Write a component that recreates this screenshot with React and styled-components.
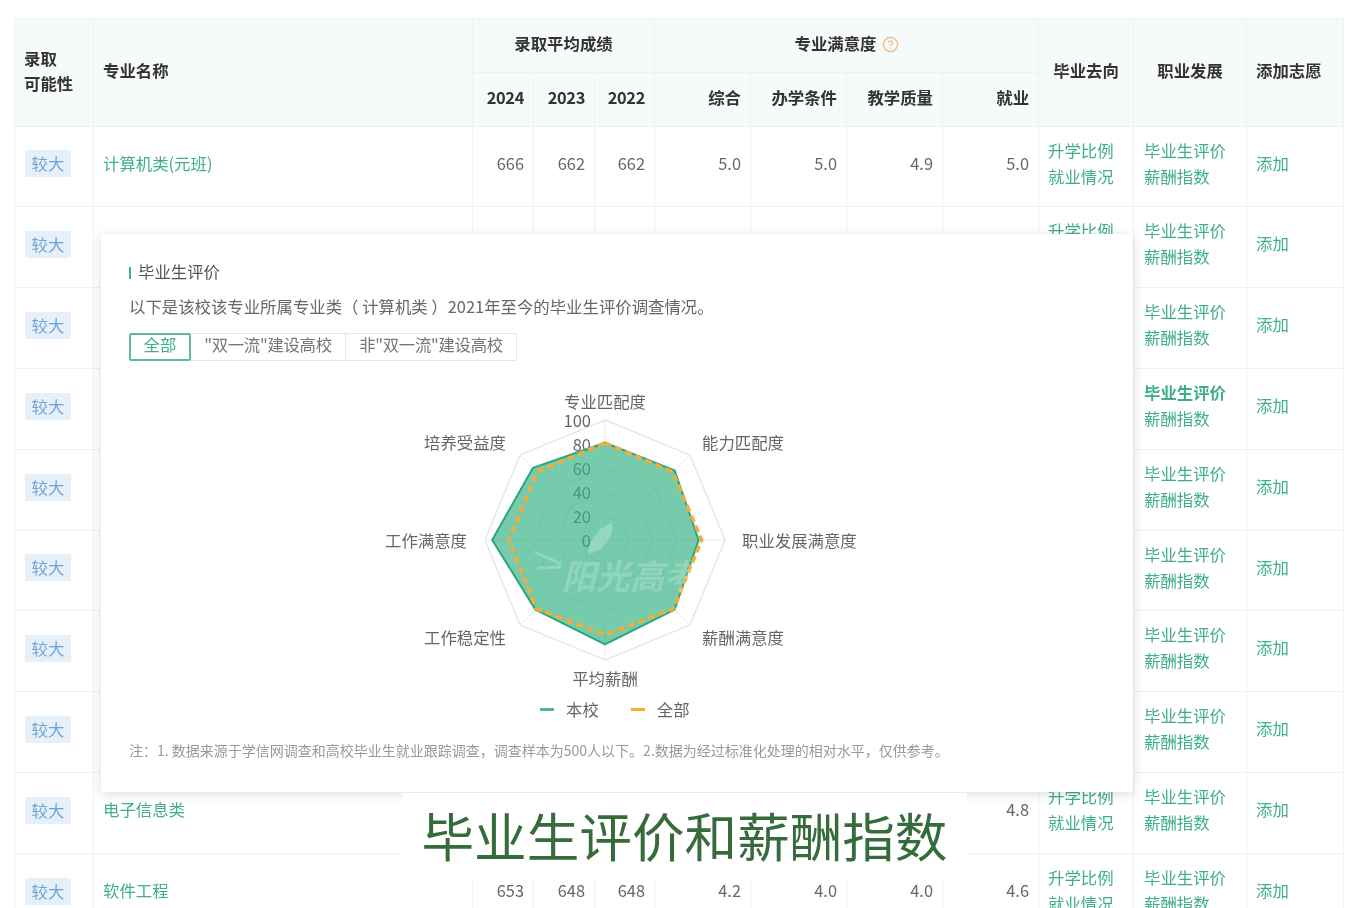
import React from 'react';
import styled, { createGlobalStyle } from 'styled-components';
import { CircleHelp } from 'lucide-react';

const GlobalStyle = createGlobalStyle`
  html, body {
    margin: 0;
    height: 908px;
    overflow: hidden;
    background: #fff;
  }
  body {
    font-family: "Noto Sans CJK SC", "Noto Sans", sans-serif;
    font-size: 16.4px;
    color: #666;
  }
`;

const Page = styled.div`
  position: relative;
  width: 1347px;
  height: 908px;
  overflow: hidden;
  box-sizing: border-box;
  padding: 18px 4px 0 14px;
  filter: blur(0.55px);
`;

const Table = styled.table`
  width: 1329px;
  table-layout: fixed;
  border-collapse: collapse;
`;

const HeadCell = styled.th`
  background: #f7fafa;
  border: 1px solid #eef2f2;
  box-sizing: border-box;
  height: ${(p) => p.$h || 54}px;
  padding: 0 9px 4px 9px;
  color: #333;
  font-size: 16.4px;
  font-weight: 700;
  line-height: 25px;
  letter-spacing: ${(p) => (p.$tight ? '-0.35px' : 'normal')};
  text-align: ${(p) => p.$align || 'left'};
`;

const Cell = styled.td`
  border: 1px solid #eff2f2;
  box-sizing: border-box;
  padding: 0 9px 8px ${(p) => p.$inset || 9}px;
  line-height: 26px;
  text-align: ${(p) => p.$align || 'left'};
  vertical-align: middle;
`;

const BodyRow = styled.tr`
  height: ${(p) => p.$h}px;
`;

const Chance = styled.span`
  display: inline-block;
  width: 46px;
  height: 27px;
  margin: 1px 0 0 1px;
  background: #e6f0fa;
  border-radius: 2px;
  color: #6ea4d4;
  line-height: 27px;
  text-align: center;
  vertical-align: middle;
`;

const Link = styled.a`
  display: block;
  color: #3eae8b;
  font-weight: ${(p) => (p.$active ? 700 : 400)};
`;

const Num = styled.span`
  color: #666;
  font-size: 16.4px;
`;

const Hint = styled(CircleHelp)`
  margin-left: 5px;
  vertical-align: -3px;
  color: #efb983;
`;

const Modal = styled.div`
  position: absolute;
  left: 101px;
  top: 234px;
  width: 1032px;
  height: 558px;
  box-sizing: border-box;
  padding: 27px 28px 0;
  background: #fff;
  border-radius: 3px;
  box-shadow: 0 2px 12px rgba(0, 0, 0, 0.14);
`;

const Title = styled.div`
  display: flex;
  align-items: center;
  gap: 7px;
  height: 20px;
  color: #555;
  &::before {
    content: '';
    width: 2px;
    height: 12px;
    margin-top: 3px;
    background: #3eae8b;
  }
`;

const Desc = styled.p`
  margin: 15px 0 0;
  line-height: 20px;
  color: #666;
`;

const Tabs = styled.div`
  display: flex;
  width: 388px;
  height: 28px;
  margin-top: 17px;
`;

const Tab = styled.div`
  box-sizing: border-box;
  width: ${(p) => p.$w}px;
  border: ${(p) => (p.$on ? '2px solid #5fb99b' : '1px solid #e5e8e8')};
  border-left-width: ${(p) => (p.$on ? 2 : 0)}px;
  border-radius: ${(p) => (p.$on ? 2 : 0)}px;
  color: ${(p) => (p.$on ? '#3eae8b' : '#777')};
  letter-spacing: ${(p) => (p.$on ? 'normal' : '-0.3px')};
  line-height: ${(p) => (p.$on ? 18 : 20)}px;
  text-align: center;
`;

const Chart = styled.svg`
  display: block;
  margin: 23px 0 0 216px;
  font-family: "Noto Sans CJK SC", "Noto Sans", sans-serif;
`;

const Legend = styled.div`
  display: flex;
  gap: 32px;
  margin: 5px 0 0 411px;
  line-height: 20px;
`;

const LegendItem = styled.span`
  display: flex;
  align-items: center;
  gap: 12px;
  &::before {
    content: '';
    width: 14px;
    height: 3px;
    background: ${(p) => p.$color};
  }
`;

const Note = styled.p`
  margin: 21px 0 0;
  color: #999;
  font-size: 14px;
  line-height: 20px;
`;

const Caption = styled.div`
  position: absolute;
  left: 402px;
  top: 793px;
  display: flex;
  align-items: center;
  justify-content: center;
  box-sizing: border-box;
  width: 565px;
  height: 87px;
  padding-bottom: 4px;
  background: #fff;
  color: #366b3b;
  font-size: 52.6px;
  line-height: 1;
`;

const rowHeights = [80, 81, 81, 81, 81, 80, 81, 81, 81, 81];
const rows = rowHeights.map((h) => ({ h }));
rows[0] = { h: 80, name: '计算机类(元班)', nums: ['666', '662', '662', '5.0', '5.0', '4.9', '5.0'] };
rows[8] = { h: 81, name: '电子信息类', nums: ['', '', '', '', '', '', '4.8'] };
rows[9] = { h: 81, name: '软件工程', nums: ['653', '648', '648', '4.2', '4.0', '4.0', '4.6'] };

const spokes = [0, 1, 2, 3, 4, 5, 6, 7];
const cx = 260;
const cy = 156;
const R = 120;

const shape = (values) =>
  values
    .map((v, i) => {
      const a = (i * Math.PI) / 4;
      const r = (v / 100) * R;
      return `${(cx + r * Math.sin(a)).toFixed(1)},${(cy - r * Math.cos(a)).toFixed(1)}`;
    })
    .join(' ');

const school = [81, 82, 78, 82, 87, 82, 94, 85];
const overall = [81, 80, 80.5, 81, 79, 81, 80.5, 80];

const axisLabels = [
  ['专业匹配度', 0, -139, 'middle'],
  ['能力匹配度', 97, -98, 'start'],
  ['职业发展满意度', 137, 0, 'start'],
  ['薪酬满意度', 97, 97, 'start'],
  ['平均薪酬', 0, 138, 'middle'],
  ['工作稳定性', -99, 97, 'end'],
  ['工作满意度', -138, 0, 'end'],
  ['培养受益度', -99, -98, 'end'],
];

const RadarChart = () => (
  <Chart width="520" height="310" viewBox="0 0 520 310">
    {[100, 80, 60, 40, 20].map((v) => (
      <polygon key={v} points={shape(spokes.map(() => v))} fill="none" stroke={v === 100 ? '#e6e8e8' : '#e2e6e6'} strokeWidth={v === 100 ? 1.5 : 1} />
    ))}
    {spokes.map((i) => {
      const a = (i * Math.PI) / 4;
      return <line key={i} x1={cx} y1={cy} x2={cx + R * Math.sin(a)} y2={cy - R * Math.cos(a)} stroke="#e6e8e8" />;
    })}
    {[100, 80, 60, 40, 20, 0].map((v) => (
      <text key={v} x={cx - 14} y={cy - (v / 100) * R} textAnchor="end" dominantBaseline="central" fontSize="16.5" fill="#666">{v}</text>
    ))}
    <polygon points={shape(school)} fill="#35b285" fillOpacity="0.68" stroke="#2ba67c" strokeWidth="2" strokeLinejoin="round" />
    <polygon points={shape(overall)} fill="none" stroke="#efae3c" strokeWidth="3.5" strokeDasharray="7 4" />
    {/* watermark */}
    <path d="M243 170c2-16 12-28 24-31 2 13-6 27-24 31z" fill="#fff" fillOpacity="0.24" />
    <path d="M190 168l26 12M192 184l24-1" stroke="#fff" strokeOpacity="0.22" strokeWidth="3" fill="none" />
    <text x="285" y="190" textAnchor="middle" dominantBaseline="central" fontSize="34" fontWeight="700" fontStyle="italic" fill="#fff" fillOpacity="0.2">阳光高考</text>
    {axisLabels.map(([label, dx, dy, anchor]) => (
      <text key={label} x={cx + dx} y={cy + dy} textAnchor={anchor} dominantBaseline="central" fontSize="16.4" fill="#666">{label}</text>
    ))}
  </Chart>
);

const App = () => (
  <>
    <GlobalStyle />
    <Page>
      <Table>
        <colgroup>
          {[79, 379, 61, 61, 60, 96, 96, 96, 96, 95, 113, 97].map((w, i) => (
            <col key={i} style={{ width: w }} />
          ))}
        </colgroup>
        <thead>
          <tr>
            <HeadCell rowSpan={2}>录取<br />可能性</HeadCell>
            <HeadCell rowSpan={2}>专业名称</HeadCell>
            <HeadCell colSpan={3} $align="center">录取平均成绩</HeadCell>
            <HeadCell colSpan={4} $align="center">专业满意度<Hint size={17} strokeWidth={1.8} /></HeadCell>
            <HeadCell rowSpan={2} $align="center">毕业去向</HeadCell>
            <HeadCell rowSpan={2} $align="center">职业发展</HeadCell>
            <HeadCell rowSpan={2}>添加志愿</HeadCell>
          </tr>
          <tr>
            {['2024', '2023', '2022'].map((t) => (
              <HeadCell key={t} $align="right" $tight>{t}</HeadCell>
            ))}
            {['综合', '办学条件', '教学质量', '就业'].map((t) => (
              <HeadCell key={t} $align="right">{t}</HeadCell>
            ))}
          </tr>
        </thead>
        <tbody>
          {rows.map((row, i) => (
            <BodyRow key={i} $h={row.h}>
              <Cell><Chance>较大</Chance></Cell>
              <Cell><Link>{row.name}</Link></Cell>
              {(row.nums || ['', '', '', '', '', '', '']).map((n, j) => (
                <Cell key={j} $align="right"><Num>{n}</Num></Cell>
              ))}
              <Cell><Link>升学比例</Link><Link>就业情况</Link></Cell>
              <Cell $inset={10}><Link $active={i === 3}>毕业生评价</Link><Link>薪酬指数</Link></Cell>
              <Cell><Link>添加</Link></Cell>
            </BodyRow>
          ))}
        </tbody>
      </Table>

      <Modal>
        <Title>毕业生评价</Title>
        <Desc>以下是该校该专业所属专业类（ 计算机类 ）2021年至今的毕业生评价调查情况。</Desc>
        <Tabs>
          <Tab $w={62} $on>全部</Tab>
          <Tab $w={155}>"双一流"建设高校</Tab>
          <Tab $w={171}>非"双一流"建设高校</Tab>
        </Tabs>
        <RadarChart />
        <Legend>
          <LegendItem $color="#4cb896">本校</LegendItem>
          <LegendItem $color="#efae3c">全部</LegendItem>
        </Legend>
        <Note>注：1. 数据来源于学信网调查和高校毕业生就业跟踪调查，调查样本为500人以下。2.数据为经过标准化处理的相对水平，仅供参考。</Note>
      </Modal>

      <Caption>毕业生评价和薪酬指数</Caption>
    </Page>
  </>
);

export default App;
